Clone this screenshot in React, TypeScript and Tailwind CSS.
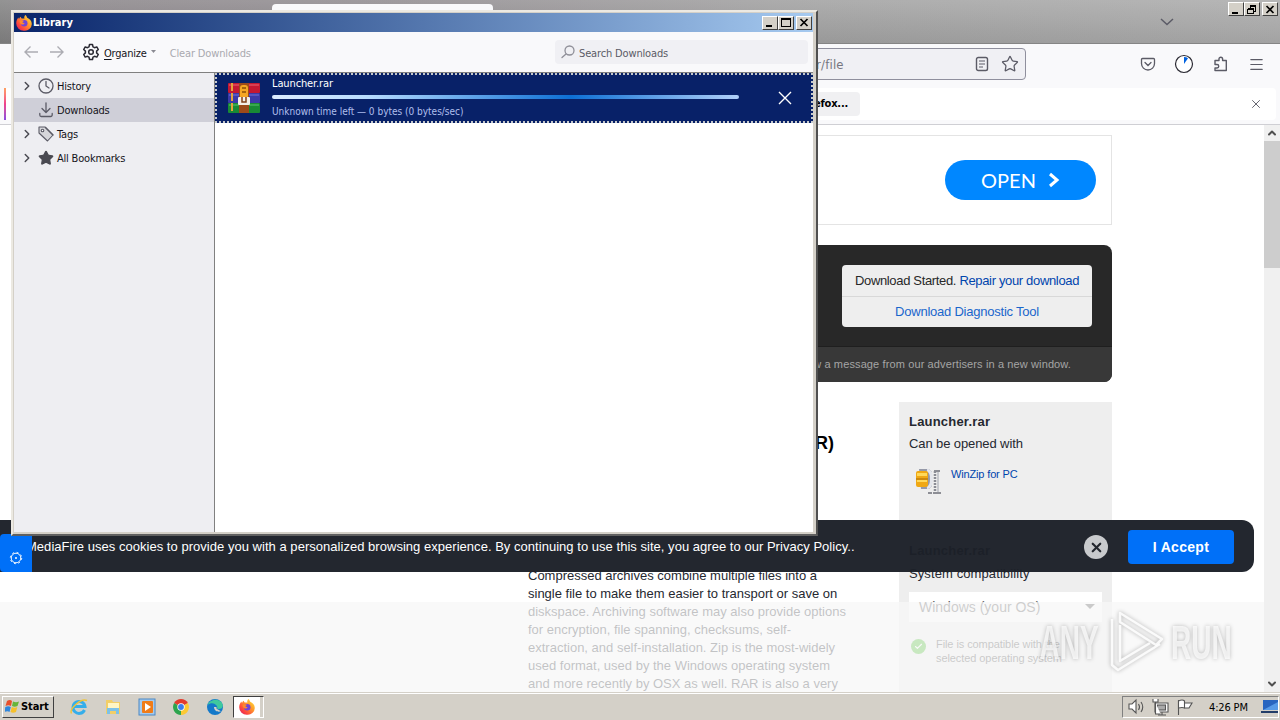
import type { ReactNode } from "react";
import { Check, ChevronDown, ChevronRight, ChevronUp, Menu, Star, X } from "lucide-react";

const UI = "font-['DejaVu_Sans_Condensed','DejaVu_Sans',sans-serif] [font-stretch:condensed]";
const RAISED = "border border-t-white border-l-white border-b-[#404040] border-r-[#404040] bg-[#d4d0c8]";

function FirefoxLogo({ size }: { size: number }) {
    return (
        <svg width={size} height={size} viewBox="0 0 16 16" className="shrink-0">
            <defs>
                <linearGradient id="fx-body" x1="1" y1="0" x2="0" y2="1">
                    <stop offset="0" stopColor="#fff04a" />
                    <stop offset=".35" stopColor="#ffa52b" />
                    <stop offset=".7" stopColor="#ff4a3c" />
                    <stop offset="1" stopColor="#d9146c" />
                </linearGradient>
            </defs>
            <path d="M9.500 0c1 1.200 1.500 2 1.700 2.800C13.500 3.600 15.800 6 15.800 9a7 7 0 0 1-7.800 6.800A7.500 7.500 0 0 1 .2 8.300C.2 5.800 1.200 4 2.300 2.600l.7 1.300C3.500 2.900 4 2.300 4.900 1.800c0 .8.200 1.400.8 1.800 1.200-.2 2-.1 2.700.2C8 2.500 8.300 1 9.500 0Z" fill="url(#fx-body)" />
            <circle cx="8.200" cy="8.200" r="3.300" fill="#6f45d8" />
            <path d="M3.600 5.800c1.600-1 3.300-.8 4.600.2-1 .3-1.500.8-1.800 1.500 1 .2 1.700.7 2.300 1.300-1 .8-2.500 1-3.800.2-.8-.6-1.400-1.700-1.300-3.200Z" fill="#ff8a2a" />
        </svg>
    );
}

type CaptionKind = "min" | "max" | "restore" | "close";

function CaptionButton({ kind }: { kind: CaptionKind }) {
    return (
        <div className={`flex h-[14px] w-4 items-center justify-center ${RAISED}`}>
            <svg width="12" height="11" viewBox="0 0 12 11" fill="none" stroke="#000" shapeRendering="crispEdges">
                {kind === "min" && <path d="M2 9h6" strokeWidth="2" />}
                {kind === "max" && <path d="M1.500 2.500h9v7h-9zM1 1.500h10" />}
                {kind === "restore" && <path d="M4 1.500h6M4.500 1v3M10 2.500H4M9.500 2v5H8M1.500 5v4.500h6V4.500h-6M1 5.500h7" />}
                {kind === "close" && <path d="m2.500 2 7 7m0-7-7 7" strokeWidth="1.700" shapeRendering="auto" />}
            </svg>
        </div>
    );
}

function CaptionButtons({ kinds }: { kinds: CaptionKind[] }) {
    return (
        <div className="flex">
            {kinds.map((kind) => (
                <div key={kind} className={kind === "close" ? "ml-[2px]" : ""}>
                    <CaptionButton kind={kind} />
                </div>
            ))}
        </div>
    );
}

function BrowserChrome() {
    return (
        <header className={`shrink-0 ${UI}`}>
            <div className="flex h-11 items-start justify-end border-b border-[#858585] bg-[linear-gradient(180deg,rgba(255,255,255,0.18),rgba(0,0,0,0.02)),linear-gradient(90deg,#7c7c7c_0px,#837e82_42px,#8b868a_400px,#9c9c9c_820px,#a6a6a6_1280px)]">
                <div className="mt-1 mr-auto ml-[272px] h-10 w-[221px] rounded-t bg-[#f9f9fb]" />
                <svg width="14" height="8" viewBox="0 0 14 8" fill="none" stroke="#5b5b66" strokeWidth="1.500" className="mt-[18px] mr-[54px]">
                    <path d="m1 1 6 5.500L13 1" />
                </svg>
                <div className="mt-[2px] mr-[2px]">
                    <CaptionButtons kinds={["min", "restore", "close"]} />
                </div>
            </div>
            <div className="flex h-11 items-center bg-[#f9f9fb] pb-1">
                <div className="ml-[171px] flex h-8 w-[855px] items-center rounded border border-[#8f8f9d] bg-[#f0f0f4] pr-[6px] text-[13px] text-[#76767f]">
                    <span className="mr-auto ml-[644px] pt-[2px] tracking-[0.2px]">r/file</span>
                    <svg width="14" height="16" viewBox="0 0 14 16" fill="none" stroke="#5b5b66" strokeWidth="1.400" className="mr-[12px] ml-2">
                        <rect x="1.500" y="1.500" width="11" height="13" rx="1.800" />
                        <path d="M4 5h6M4 8h6M4 11h4" strokeWidth="1.200" />
                    </svg>
                    <Star size={18} strokeWidth={1.7} className="text-[#5b5b66]" />
                </div>
                <svg width="16" height="16" viewBox="0 0 16 16" fill="none" stroke="#5b5b66" strokeWidth="1.300" className="ml-[114px]" strokeLinecap="round">
                    <path d="M2.500 2.500h11a1 1 0 0 1 1 1V7.500a6.500 6.500 0 0 1-13 0v-4a1 1 0 0 1 1-1Z" />
                    <path d="m5 6.500 3 3 3-3" />
                </svg>
                <svg width="20" height="20" viewBox="0 0 20 20" className="ml-[18px]">
                    <circle cx="10" cy="10" r="8.500" fill="#fff" stroke="#2b2a33" strokeWidth="1.200" />
                    <path d="M10 10V3a7 7 0 0 1 4 1.300Z" fill="#0061e0" />
                </svg>
                <svg width="16" height="16" viewBox="0 0 16 16" fill="none" stroke="#5b5b66" strokeWidth="1.400" strokeLinejoin="round" className="ml-[19px]">
                    <path d="M2 4.500h4V3a1.800 1.800 0 0 1 3.600 0v1.500h3.700v10H2V12h2a1.700 1.700 0 0 0 0-3.500H2Z" />
                </svg>
                <Menu size={17} strokeWidth={1.7} className="ml-[19px] text-[#5b5b66]" />
            </div>
            <div className="flex h-[37px] border-b border-[#cfcfd4] bg-[#f9f9fb]">
                <div className="ml-1 flex h-8 w-[1272px] items-center rounded bg-white">
                    <div className="h-full w-[2px] bg-linear-to-b from-[#ffa060] via-[#f0408a] to-[#8a48e0]" />
                    <div className="ml-[754px] flex h-6 w-[100px] items-center justify-end rounded bg-[#f0f0f2] pt-px pr-3 text-[11px] font-bold text-black tracking-[-0.2px]">
                        efox...
                    </div>
                    <X size={14} strokeWidth={1.6} className="mr-[13px] ml-auto text-[#5b5b66]" />
                </div>
            </div>
        </header>
    );
}

function WinZipIcon() {
    return (
        <svg width="26" height="26" viewBox="0 0 26 26">
            <path d="M4 1h10l3 3v14l-3 3H6z" fill="#9599a8" />
            <path d="M12 2c6 1 6 17 0 18" fill="none" stroke="#e4e6ec" strokeWidth="3" />
            <rect x="1" y="3" width="12" height="16" rx="2" fill="#f0a814" />
            <path d="M2 5h10v3H2zM2 12h10v2H2z" fill="#ffd95a" />
            <path d="M1 11h12" stroke="#a86a08" />
            <path d="M19 3h6M18 25h8M13 25h4" stroke="#6d6f78" strokeWidth="1.500" />
            <path d="M20 3v21" stroke="#8a8c94" strokeWidth="2.500" strokeDasharray="2 1" />
            <path d="M23 4v20" stroke="#b9bbc2" strokeWidth="1.500" />
        </svg>
    );
}

function FileSidebar() {
    return (
        <aside className="h-[290px] w-[213px] bg-[#eee] px-[10px] pt-[11px] text-[13px] leading-[18px] text-[#252830]">
            <h4 className="font-bold tracking-[0.2px]">Launcher.rar</h4>
            <p className="mt-1 tracking-[-0.1px]">Can be opened with</p>
            <div className="mt-[15px] ml-[6px] flex h-[26px]">
                <WinZipIcon />
                <span className="ml-[10px] text-[11px] leading-[13px] text-[#0045ad] tracking-[-0.15px]">WinZip for PC</span>
            </div>
            <h4 className="mt-[48px] font-bold tracking-[0.2px]">Launcher.rar</h4>
            <p className="mt-[5px] tracking-[0.1px]">System compatibility</p>
            <div className="mt-[9px] flex h-[30px] items-center bg-white pr-[7px] pl-[10px] text-[14px] text-[#555]">
                <span className="mr-auto">Windows (your OS)</span>
                <svg width="10" height="6" viewBox="0 0 10 6"><path d="M0 0h10L5 5Z" fill="#444" /></svg>
            </div>
            <div className="mt-[15px] flex">
                <div className="mt-[2px] ml-[2px] flex size-[15px] items-center justify-center rounded-full bg-[#3cba1f]">
                    <Check size={9} strokeWidth={3} color="#fff" />
                </div>
                <p className="ml-[10px] text-[11px] leading-[14px] whitespace-nowrap text-[#444] tracking-[-0.08px]">
                    File is compatible with the<br />selected operating system
                </p>
            </div>
        </aside>
    );
}

const ARTICLE = [
    "Compressed archives combine multiple files into a",
    "single file to make them easier to transport or save on",
    "diskspace. Archiving software may also provide options",
    "for encryption, file spanning, checksums, self-",
    "extraction, and self-installation. Zip is the most-widely",
    "used format, used by the Windows operating system",
    "and more recently by OSX as well. RAR is also a very",
];

function WebPage() {
    return (
        <main className="h-[567px] w-[1264px] overflow-hidden bg-white pt-[10px] pl-[152px] font-['Liberation_Sans',Arial,sans-serif]">
            <div className="flex h-[90px] w-[960px] items-center justify-end border border-[#e4e4e4] pr-[15px]">
                <div className="flex h-10 w-[151px] items-center justify-center gap-3 rounded-full bg-[#0087ff] font-['Lato',sans-serif] text-[20px] text-white">
                    <span>OPEN</span>
                    <svg width="12" height="16" viewBox="0 0 12 16" fill="none" stroke="#fff" strokeWidth="3"><path d="m2 2 7 6-7 6" /></svg>
                </div>
            </div>
            <div className="mt-5 flex h-[137px] w-[960px] flex-col items-end overflow-hidden rounded-lg bg-[#282828]">
                <div className="mt-5 mr-5 h-[62px] w-[250px] rounded bg-[#eee] text-center text-[13px] leading-[31px] whitespace-nowrap">
                    <p className="border-b border-[#d8d8d8] text-[#282828] tracking-[-0.34px]">
                        Download Started. <span className="text-[#0045ad]">Repair your download</span>
                    </p>
                    <p className="leading-[30px] text-[#1a66cc] tracking-[-0.23px]">Download Diagnostic Tool</p>
                </div>
                <div className="mt-auto flex h-9 w-full items-center justify-end border-t border-[#1f1f1f] bg-[#383838] pr-[41px] text-[11px] text-[#a5a5a5] tracking-[0.12px]">
                    w a message from our advertisers in a new window.
                </div>
            </div>
            <div className="mt-5 flex w-[960px] justify-between">
                <article className="ml-[376px] w-[330px]">
                    <h2 className="w-[306px] pt-[29px] text-right text-[18px] leading-6 font-bold text-black">R)</h2>
                    <div className="mt-[112px] text-[13px] leading-[18px] whitespace-nowrap text-[#252830]">
                        {ARTICLE.map((line) => <p key={line}>{line}</p>)}
                    </div>
                </article>
                <FileSidebar />
            </div>
        </main>
    );
}

function Scrollbar() {
    return (
        <div className="flex w-4 flex-col items-center bg-[#f0f0f0] text-[#505050]">
            <ChevronUp size={12} strokeWidth={4} className="my-[2px]" />
            <div className="h-[127px] w-full bg-[#cdcdcd]" />
            <ChevronDown size={12} strokeWidth={4} className="mt-auto mb-[2px]" />
        </div>
    );
}

function CookieBar() {
    return (
        <div className="absolute top-[520px] left-0 flex h-[52px] w-[1254px] items-center rounded-r-xl bg-[#1c2028]/97 pt-[2px] pr-5 font-['Liberation_Sans',Arial,sans-serif]">
            <div className="mt-3 flex h-[38px] w-8 shrink-0 items-center justify-center rounded-l bg-[#0070f8] pt-[10px] pr-px">
                <svg width="14" height="14" viewBox="0 0 14 14" fill="none" stroke="#fff">
                    <circle cx="7" cy="7" r="4.800" />
                    <circle cx="7" cy="7" r="5.700" strokeDasharray="1.800 2.680" />
                    <circle cx="7" cy="7" r=".6" fill="#fff" />
                </svg>
            </div>
            <div className="mr-auto overflow-hidden">
                <p className="-ml-[6px] text-[13px] whitespace-nowrap text-white tracking-[0.03px]">
                    MediaFire uses cookies to provide you with a personalized browsing experience. By continuing to use this site, you agree to our Privacy Policy..
                </p>
            </div>
            <div className="flex size-6 items-center justify-center rounded-full bg-[#c8cacd] text-[#22262e]">
                <X size={15} strokeWidth={3.5} />
            </div>
            <div className="ml-5 flex h-[34px] w-[106px] items-center justify-center rounded bg-[#0070f8] text-[14px] font-bold text-white tracking-[0.3px]">
                I Accept
            </div>
        </div>
    );
}

function RarIcon() {
    return (
        <svg width="32" height="30" viewBox="0 0 32 30">
            <rect width="32" height="10" rx="1" fill="#c41832" />
            <rect y="10" width="32" height="10" rx="1" fill="#3b3aa8" />
            <rect y="20" width="32" height="10" rx="1" fill="#188a35" />
            <path d="M1 2h30" stroke="#ea6674" /><path d="M1 12h30" stroke="#7474d8" /><path d="M1 22h30" stroke="#59c46a" />
            <path d="M4 0v30" stroke="#e3a23c" strokeWidth="2" strokeDasharray="8 2" />
            <path d="M11 0h10v30H11z" fill="#9d4a1a" />
            <rect x="12" y="2" width="8" height="14" rx="3" fill="#f5a623" />
            <path d="M14 5h4M14 9h4" stroke="#8a4d08" strokeWidth="1.500" />
            <rect x="10" y="14" width="12" height="8" rx="1" fill="#f4efe8" />
            <path d="M14 14v5h4v-5" fill="none" stroke="#80401a" strokeWidth="1.500" />
        </svg>
    );
}

const LINE = { fill: "none", stroke: "#5b5b66", strokeWidth: 1.3, strokeLinecap: "round", strokeLinejoin: "round" } as const;

function TreeRow({ label, icon, open = true, selected = false }: { label: string; icon: ReactNode; open?: boolean; selected?: boolean }) {
    return (
        <div className={`flex h-6 items-center pl-[6px] ${selected ? "bg-[#cfcfd8]" : ""}`}>
            <div className="w-[18px]">{open && <ChevronRight size={14} strokeWidth={2.5} className="text-[#4a4a52]" />}</div>
            {icon}
            <span className="ml-[3px] pt-[3px]">{label}</span>
        </div>
    );
}

function LibraryWindow() {
    return (
        <section className={`absolute top-[10px] left-[11px] flex h-[526px] w-[807px] flex-col border-2 border-t-[#ece9e2] border-r-[#505050] border-b-[#606060] border-l-[#ece9e2] bg-[#d4d0c8] pt-px pr-[3px] pb-[2px] pl-px text-[11px] text-[#15141a] tracking-[-0.2px] ${UI}`}>
            <div className="flex h-[19px] shrink-0 items-center bg-linear-to-r from-[#0a246a] to-[#a6caf0] pr-px pl-[2px]">
                <FirefoxLogo size={16} />
                <span className="mr-auto ml-px pt-[2px] font-bold text-white tracking-[0.05px]">Library</span>
                <CaptionButtons kinds={["min", "max", "close"]} />
            </div>
            <div className="flex h-[41px] shrink-0 items-center border-b border-[#808080] bg-[#f9f9fb]">
                <svg width="42" height="14" viewBox="0 0 42 14" fill="none" stroke="#acacb2" strokeWidth="1.400" className="ml-[9px]">
                    <path d="M15 7H2m5.500-5.500L2 7l5.500 5.500M27 7h13m-5.500-5.500L40 7l-5.500 5.500" />
                </svg>
                <svg width="18" height="18" viewBox="0 0 18 18" {...LINE} stroke="#2b2a33" strokeWidth={1.5} className="ml-[17px]">
                    <path d="M7.500 1.500h3l.5 2.300 1.600.9 2.200-.8 1.500 2.600-1.700 1.600v1.800l1.700 1.600-1.500 2.600-2.200-.8-1.600.9-.5 2.300h-3L7 14.200l-1.600-.9-2.200.8-1.500-2.600 1.700-1.600V8.100L1.700 6.500l1.500-2.600 2.200.8L7 3.800Z" />
                    <circle cx="9" cy="9" r="2.300" />
                </svg>
                <span className="ml-1 pt-1 underline-offset-2"><u>O</u>rganize</span>
                <svg width="7" height="4" viewBox="0 0 7 4" className="ml-[3px]"><path d="m1 0 2.500 3L6 0" fill="#8a8a92" /></svg>
                <span className="ml-[13px] pt-1 text-[#a9a9af] tracking-[-0.15px]">Clear Downloads</span>
                <div className="mr-[5px] ml-auto flex h-6 w-[253px] items-center rounded bg-[#f0f0f4] pl-[5px] text-[#5b5b66]">
                    <svg width="16" height="16" viewBox="0 0 16 16" {...LINE} stroke="#8f8f98"><circle cx="9.500" cy="6.500" r="4.500" /><path d="m6 10-4 3.500" /></svg>
                    <span className="ml-[3px] pt-1 tracking-[-0.15px]">Search Downloads</span>
                </div>
            </div>
            <div className="flex min-h-0 flex-1">
                <nav className="w-[200px] shrink-0 bg-[#eeeef2] pt-px">
                    <TreeRow label="History" icon={<svg width="16" height="16" viewBox="0 0 16 16" {...LINE}><circle cx="8" cy="8" r="7" /><path d="M8 3.500V8l3 2" /></svg>} />
                    <TreeRow label="Downloads" open={false} selected icon={<svg width="16" height="16" viewBox="0 0 16 16" {...LINE}><path d="M8 .8V10M4 6.500l4 4 4-4M1.800 11.500v1.500a1.500 1.500 0 0 0 1.500 1.500h9.400a1.500 1.500 0 0 0 1.500-1.500v-1.500" /></svg>} />
                    <TreeRow label="Tags" icon={<svg width="16" height="16" viewBox="0 0 16 16" {...LINE} strokeWidth={1.1}><path d="M1 1h6l8 8-5.500 6L1 7Z" fill="#d6d6da" /><circle cx="4.500" cy="4.500" r="1.300" fill="#fff" /><path d="m7.500 1.500 7.500 7.500" /></svg>} />
                    <TreeRow label="All Bookmarks" icon={<Star size={16} fill="#4a4a52" color="#4a4a52" />} />
                </nav>
                <div className="min-w-0 flex-1 border-l border-[#808080] bg-white">
                    <div className="flex h-[50px] items-center border-2 border-dotted border-[#c4c8cc] bg-[#082168] pl-[11px] text-white">
                        <RarIcon />
                        <div className="ml-3 w-[467px] pb-px">
                            <p className="leading-[13px] tracking-[-0.12px]">Launcher.rar</p>
                            <div className="mt-[5px] h-1 rounded-full bg-[linear-gradient(90deg,#dcecff_0%,#b8dcff_20%,#0d6fd4_64%,#b0cff8_100%)]" />
                            <p className="mt-[6px] text-[10px] leading-[13px] text-[#b0bfec] tracking-[-0.01px]">Unknown time left — 0 bytes (0 bytes/sec)</p>
                        </div>
                        <svg width="14" height="14" viewBox="0 0 14 14" stroke="#fff" strokeWidth="1.400" className="ml-[39px]"><path d="m1 1 12 12M13 1 1 13" /></svg>
                    </div>
                </div>
            </div>
        </section>
    );
}

function Watermark() {
    return (
        <svg width="200" height="76" viewBox="0 0 200 76" className="absolute top-[605px] left-[1036px] drop-shadow-[0_0_2px_rgba(0,0,0,0.35)]" fontFamily="'Liberation Sans', Arial, sans-serif">
            <g fill="#fff" fillOpacity=".7" fontSize="49" fontWeight="bold" transform="translate(0 54)">
                <text transform="scale(.59 1)" x="6" textLength="100" lengthAdjust="spacingAndGlyphs">ANY</text>
                <text transform="scale(.59 1)" x="229" textLength="103" lengthAdjust="spacingAndGlyphs">RUN</text>
            </g>
            <g fill="none" stroke="#fff" strokeOpacity=".85" strokeWidth="2.500" strokeLinejoin="round">
                <path d="M84 8 126 34 120 40 84 17Z" />
                <path d="M76 14v46l6 5 42-26M84 20v36l30-18" />
            </g>
        </svg>
    );
}

function Taskbar() {
    return (
        <footer className={`flex h-7 shrink-0 items-center border-t border-[#d4d0c8] bg-[#d4d0c8] text-[11px] text-black shadow-[inset_0_1px_0_#fff] ${UI}`}>
            <div className={`ml-[2px] flex h-[22px] w-[52px] items-center pl-[2px] font-bold tracking-[-0.1px] ${RAISED}`}>
                <svg width="15" height="15" viewBox="0 0 15 15" className="mr-px">
                    <path d="M2 2q3-2 5 0L6 7Q3.500 5.500.5 7Z" fill="#e8502c" />
                    <path d="M8 2.500q3 1.500 6 0L12.500 7q-3 1.500-5.500 0Z" fill="#67b53a" />
                    <path d="M.3 8q3-1.500 5.500 0l-1.300 5q-2-1.500-5 0Z" fill="#2f86dc" />
                    <path d="M6.800 8q3 1.500 5.500 0L11 13q-3 1.500-5.500 0Z" fill="#f6c02b" />
                </svg>
                <span className="pt-px">Start</span>
            </div>
            <svg width="18" height="18" viewBox="0 0 18 18" fill="none" className="mt-px ml-4">
                <path d="M14.500 12A6 6 0 1 1 15 8.500H4" stroke="#35aeea" strokeWidth="3" />
                <path d="M1.500 15.500C-1 11 11-.5 17 2.500" stroke="#efc43a" strokeWidth="1.500" />
            </svg>
            <svg width="18" height="18" viewBox="0 0 18 18" className="mt-px ml-4">
                <path d="M2 2h6l1 2h7v12H2z" fill="#f2ce67" /><path d="M4 5h11v5H4z" fill="#fff5c4" />
                <path d="M3 16v-6h12v6h-3v-3H6v3Z" fill="#7cc1e8" />
            </svg>
            <svg width="18" height="18" viewBox="0 0 18 18" className="mt-px ml-4">
                <rect x="1" y="1" width="16" height="16" fill="#a5cbee" stroke="#4b87c4" />
                <rect x="4" y="3" width="11" height="12" rx="1" fill="#f07c18" /><path d="M7 5v8l6-4Z" fill="#fff" />
            </svg>
            <svg width="16" height="16" viewBox="0 0 16 16" className="mt-px ml-[17px]">
                <path d="M8 8 1.100 4A8 8 0 0 1 14.900 4Z" fill="#e33b2e" /><path d="M8 8l6.900-4A8 8 0 0 1 8 16Z" fill="#fcc934" />
                <path d="M8 8v8A8 8 0 0 1 1.100 4Z" fill="#2da44e" /><circle cx="8" cy="8" r="3.700" fill="#fff" /><circle cx="8" cy="8" r="2.900" fill="#3b7ded" />
            </svg>
            <svg width="16" height="16" viewBox="0 0 16 16" className="mt-px ml-[18px]">
                <circle cx="8" cy="8" r="8" fill="#1479c9" /><path d="M.5 6C2 1 11-2 15 4c2 4 0 6.500-4.500 6L10 7C8 4 4 3 .5 6Z" fill="#3fc99d" />
                <path d="M7 8c0 4 4 5.500 7 4.300L10 10q-1-.5-.5-2Z" fill="#d4d0c8" />
            </svg>
            <div className="mt-px ml-[10px] flex h-[22px] w-[31px] border border-t-[#404040] border-r-white border-b-white border-l-[#404040]">
                <div className="flex w-[26px] items-center justify-center bg-white"><FirefoxLogo size={16} /></div>
            </div>
            <div className="mt-px mr-px ml-auto flex h-[22px] w-[157px] items-center border border-t-[#808080] border-r-white border-b-white border-l-[#808080]">
                <svg width="66" height="18" viewBox="0 0 66 18" fill="#fff" stroke="#555" strokeWidth="1.100" className="ml-[5px]">
                    <path d="M1 6h3l4-4v13l-4-4H1Z" /><path d="M10.500 6q2 3 0 6M13 4q3.500 5 0 10" fill="none" />
                    <path d="M27 5h13v9H27zM30 17h8M34 14v3" /><rect x="29.500" y="7" width="8" height="5" fill="#aaa" /><path d="M25 1v3h5V1M27.500 4v12h5" />
                    <path d="M50.500 2v15" /><path d="M50.500 3q4-2 6 0v7q-2-1-6 0ZM57 5h7l-3 5h-4" />
                </svg>
                <span className="ml-[15px] pt-[2px] tracking-[-0.15px]">4:26 PM</span>
                <svg width="17" height="14" viewBox="0 0 17 14" className="ml-auto"><rect x="2" width="15" height="10" fill="#2865c0" /><path d="m2 10 15-8v8Z" fill="#579be8" /><path d="M0 11h17v2H0z" fill="#233d68" /></svg>
            </div>
        </footer>
    );
}

export default function App() {
    return (
        <div className="relative flex h-[720px] w-[1280px] flex-col overflow-hidden bg-white">
            <BrowserChrome />
            <div className="flex min-h-0 flex-1">
                <WebPage />
                <Scrollbar />
            </div>
            <Taskbar />
            <div className="absolute top-[602px] left-0 h-[90px] w-[1264px] bg-[#f7f7f7]/75" />
            <CookieBar />
            <LibraryWindow />
            <Watermark />
        </div>
    );
}
